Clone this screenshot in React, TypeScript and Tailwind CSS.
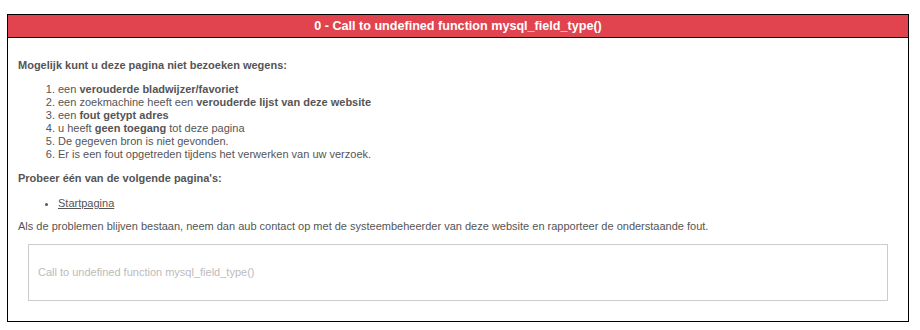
export default function App() {
  return (
    <div className="w-[920px] h-[330px] bg-white pt-[14px] pl-[7px]" style={{ fontFamily: '"Liberation Sans", Arial, sans-serif' }}>
      <div className="w-[902px] h-[308px] border border-black">
        <div className="h-[23px] bg-[#e1444e] border-b border-black flex items-center justify-center text-white font-bold text-[12.6px]">
          0 - Call to undefined function mysql_field_type()
        </div>
        <div className="px-[10px] pt-[21px] text-[11px] leading-[13px] text-[#555]">
          <p className="font-bold">Mogelijk kunt u deze pagina niet bezoeken wegens:</p>
          <ol className="list-decimal pl-10 mt-[11px]">
            <li>een <b>verouderde bladwijzer/favoriet</b></li>
            <li>een zoekmachine heeft een <b>verouderde lijst van deze website</b></li>
            <li>een <b>fout getypt adres</b></li>
            <li>u heeft <b>geen toegang</b> tot deze pagina</li>
            <li>De gegeven bron is niet gevonden.</li>
            <li>Er is een fout opgetreden tijdens het verwerken van uw verzoek.</li>
          </ol>
          <p className="font-bold mt-[11px]">Probeer één van de volgende pagina's:</p>
          <ul className="list-disc pl-10 mt-[12px]">
            <li><a className="underline text-[#555]">Startpagina</a></li>
          </ul>
          <p className="mt-[10px]">Als de problemen blijven bestaan, neem dan aub contact op met de systeembeheerder van deze website en rapporteer de onderstaande fout.</p>
          <div className="mx-[10px] mt-[11px] h-[57px] border border-[#ccc] flex items-center px-[9px] text-[#bbb]">
            Call to undefined function mysql_field_type()
          </div>
        </div>
      </div>
    </div>
  );
}
